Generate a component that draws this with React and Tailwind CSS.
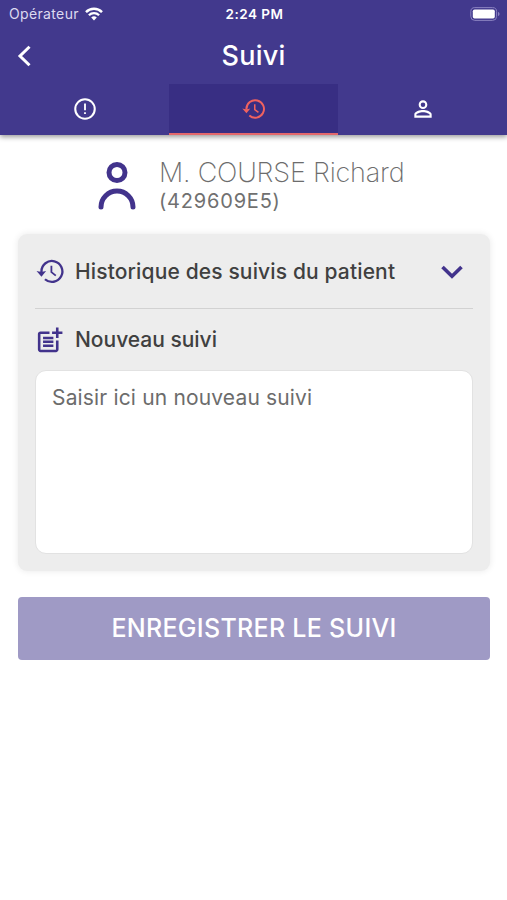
import React from "react";
import { MdPersonOutline, MdPostAdd } from "react-icons/md";

function AlertIcon({ size }) {
  return (
    <svg width={size} height={size} viewBox="0 0 24 24" fill="none" stroke="currentColor">
      <circle cx="12" cy="12" r="9" strokeWidth="1.900" />
      <path d="M12 7v6.200M12 15v1.700" strokeWidth="1.700" />
    </svg>
  );
}

function HistoryIcon({ size, className }) {
  return (
    <svg
      width={size}
      height={size}
      viewBox="0 0 24 24"
      fill="none"
      stroke="currentColor"
      className={className}
    >
      <path d="M5 12.500V12a8.100 8.100 0 1 1 2.700 6" strokeWidth="1.800" />
      <path d="M1.200 11.600q3.700 1.100 7.400 0L5 16Z" fill="currentColor" stroke="none" />
      <path d="M12.700 7.600v4.900l3.400 2.700" strokeWidth="1.400" />
    </svg>
  );
}

const tabs = [
  { name: "alert", Icon: AlertIcon },
  { name: "history", Icon: HistoryIcon },
  { name: "profile", Icon: MdPersonOutline },
];

function StatusBar() {
  return (
    <div className="grid h-7 grid-cols-3 items-center pl-[9px] pr-[7px] text-white">
      <div className="flex items-center gap-[6px]">
        <span className="text-[14px] leading-7 tracking-[0.35px] text-[#dddaf0]">
          Opérateur
        </span>
        <svg width="18" height="14" viewBox="0 0 18 14" fill="none">
          <path d="M1 5.1a11.4 11.4 0 0 1 16 0" stroke="white" strokeWidth="2.5" />
          <path d="M3.9 8.2a7.2 7.2 0 0 1 10.2 0" stroke="white" strokeWidth="2.3" />
          <path d="M9 13.5 6.2 10.6a4 4 0 0 1 5.6 0Z" fill="white" />
        </svg>
      </div>
      <span className="whitespace-nowrap text-center text-[13.5px] font-semibold tracking-[0.5px]">
        2:24 PM
      </span>
      <svg className="justify-self-end" width="30" height="14" viewBox="0 0 30 14">
        <rect x="0.8" y="0.6" width="25.8" height="12.8" rx="4" fill="none" stroke="#8a82c0" />
        <rect x="2.8" y="2.5" width="22" height="9" rx="1.800" fill="white" />
        <path d="M28 5v4c1-.4 1.500-1.100 1.500-2s-.5-1.600-1.500-2Z" fill="#8a82c0" />
      </svg>
    </div>
  );
}

function Header() {
  return (
    <div className="h-[135px] bg-[#42398d] shadow-[0_2px_5px_rgba(0,0,0,0.4)]">
      <StatusBar />
      <div className="grid h-14 grid-cols-3 items-center text-white">
        <svg className="-mt-px ml-[17px]" width="15" height="22" viewBox="0 0 15 22" fill="none">
          <path d="M12.500 1.700 3 11l9.500 9.300" stroke="white" strokeWidth="3" />
        </svg>
        <h1 className="text-center text-[27px] font-medium leading-[54px] tracking-[0.2px]">
          Suivi
        </h1>
      </div>
      <div className="grid h-[51px] grid-cols-3">
        {tabs.map(({ name, Icon }) => (
          <div
            key={name}
            className={
              name === "history"
                ? "flex items-center justify-center border-b-2 border-[#e4686c] bg-[#382e83] text-[#f0625f]"
                : "flex items-center justify-center border-b-2 border-transparent text-white"
            }
          >
            <Icon size={26} />
          </div>
        ))}
      </div>
    </div>
  );
}

function Patient() {
  return (
    <div className="flex h-[99px] pl-[97px] pt-[26px]">
      <svg width="40" height="50" viewBox="0 0 40 50" fill="none" stroke="#42338c" strokeWidth="5">
        <circle cx="20" cy="11.5" r="8" />
        <path d="M4 46a16 16 0 0 1 32 0" strokeLinecap="round" />
      </svg>
      <div className="-mt-[4px] pl-[22px]">
        <h2 className="whitespace-nowrap text-[27px] font-extralight leading-[31px] tracking-[-0.2px] text-[#6c6c6c]">
          M. COURSE Richard
        </h2>
        <div className="text-[20px] leading-[26px] tracking-[0.8px] text-[#707070]">
          (429609E5)
        </div>
      </div>
    </div>
  );
}

function FollowUp() {
  return (
    <div className="ml-[18px] mr-[17px] h-[337px] rounded-[9px] bg-[#ededed] px-[17px] shadow-[0_0_7px_rgba(0,0,0,0.09)]">
      <div className="flex h-[75px] items-center border-b border-[#d2d2d2] pt-px">
        <HistoryIcon size={31} className="text-[#42338c]" />
        <span className="ml-[9px] whitespace-nowrap text-[21px] font-medium tracking-[0.14px] text-[#404040]">
          Historique des suivis du patient
        </span>
        <svg className="ml-auto mr-[9px]" width="24" height="16" viewBox="0 0 24 16" fill="none">
          <path d="m2.500 3 9.500 9.300L21.500 3" stroke="#42338c" strokeWidth="3.600" />
        </svg>
      </div>
      <div className="flex h-[61px] items-center pt-px">
        <MdPostAdd size={31} className="-ml-px mr-px text-[#42338c]" />
        <span className="ml-[9px] text-[21px] font-medium tracking-[-0.02px] text-[#404040]">
          Nouveau suivi
        </span>
      </div>
      <textarea
        className="block h-[184px] w-full resize-none rounded-[11px] border border-[#e2e2e2] bg-white px-4 py-3 text-[21px] leading-[30px] tracking-[0.16px] outline-none placeholder:text-[#6c6c6c]"
        placeholder="Saisir ici un nouveau suivi"
      />
    </div>
  );
}

export default function App() {
  return (
    <div className="h-[900px] w-[507px] overflow-hidden bg-white font-['Inter',sans-serif]">
      <Header />
      <Patient />
      <FollowUp />
      <div className="pl-[18px] pr-[17px] pt-[26px]">
        <button className="h-[63px] w-full rounded-[4px] bg-[#9f9ac5] text-[25px] font-medium tracking-[0.3px] text-white">
          ENREGISTRER LE SUIVI
        </button>
      </div>
    </div>
  );
}
